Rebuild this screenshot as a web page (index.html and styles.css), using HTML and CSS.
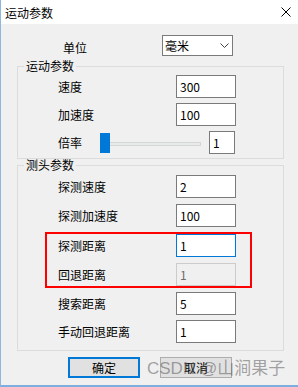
FILE: index.html
```html
<!DOCTYPE html>
<html lang="zh">
<head>
  <meta charset="utf-8">
  <link rel="stylesheet" href="styles.css">
</head>
<body>
  <div class="window">
    <div class="titlebar">
      <span class="title">运动参数</span>
      <svg class="close" width="10" height="10" viewBox="0 0 10 10">
        <path d="M0.5 0.5L9.5 9.5M9.5 0.5L0.5 9.5" stroke="#000" stroke-width="1" fill="none"/>
      </svg>
    </div>

    <div class="unit-row">
      <span class="unit-label">单位</span>
      <div class="select">
        <span>毫米</span>
        <svg width="9" height="5" viewBox="0 0 9 5">
          <path d="M0.5 0.5L4.5 4.5L8.5 0.5" stroke="#444" stroke-width="1" fill="none"/>
        </svg>
      </div>
    </div>

    <!-- 运动参数 -->
    <fieldset class="group motion">
      <legend>运动参数</legend>
      <div class="row">
        <label>速度</label>
        <input class="field" type="text" value="300">
      </div>
      <div class="row">
        <label>加速度</label>
        <input class="field" type="text" value="100">
      </div>
      <div class="row">
        <label class="short">倍率</label>
        <div class="slider">
          <div class="track"></div>
          <div class="thumb"></div>
        </div>
        <input class="field small" type="text" value="1">
      </div>
    </fieldset>

    <!-- 测头参数 -->
    <fieldset class="group probe">
      <legend>测头参数</legend>
      <div class="row">
        <label>探测速度</label>
        <input class="field" type="text" value="2">
      </div>
      <div class="row">
        <label>探测加速度</label>
        <input class="field" type="text" value="100">
      </div>
      <div class="mark">
        <div class="row">
          <label>探测距离</label>
          <input class="field focus" type="text" value="1">
        </div>
        <div class="row">
          <label>回退距离</label>
          <input class="field" type="text" value="1" disabled>
        </div>
      </div>
      <div class="row">
        <label>搜索距离</label>
        <input class="field" type="text" value="5">
      </div>
      <div class="row">
        <label>手动回退距离</label>
        <input class="field" type="text" value="1">
      </div>
    </fieldset>

    <div class="buttons">
      <button class="btn btn-default">确定</button>
      <button class="btn">取消</button>
    </div>

    <div class="watermark">CSDN @山涧果子</div>
  </div>
</body>
</html>
```

FILE: styles.css
```css
* {
  box-sizing: border-box;
}

body {
  margin: 0;
  font-family: "Noto Sans CJK SC", "Microsoft YaHei", sans-serif;
  font-size: 12px;
  color: #000;
}

.window {
  position: relative;
  width: 298px;
  height: 387px;
  background-color: #f0f0f0;
  border-left: 1px solid #8fb6de;
  border-bottom: 2px solid #7eaee0;
  overflow: hidden;
}

.titlebar {
  display: flex;
  justify-content: space-between;
  align-items: center;
  height: 24px;
  background-color: #fff;
  padding: 0 7px 0 4px;
}

.unit-row {
  display: flex;
  align-items: center;
  height: 21px;
  margin-top: 11px;
}

.unit-label {
  width: 161px;
  padding-left: 62px;
  line-height: 16px;
  margin-top: 5px;
}

.select {
  display: flex;
  justify-content: space-between;
  align-items: center;
  width: 71px;
  height: 21px;
  border: 1px solid #7a7a7a;
  background-color: #fff;
  padding: 0 3px 0 2px;
}

.group {
  margin: 4px 14px 0 16px;
  border: 1px solid #dcdcdc;
  padding: 3px 0 4px 0;
  min-width: 0;
}

.group legend {
  margin-left: 6px;
  padding: 0 2px;
  line-height: 12px;
}

.probe {
  margin-top: 0;
  padding: 4px 0 7px 0;
}

.row {
  display: flex;
  align-items: center;
  height: 23px;
}

.row label {
  width: 158px;
  padding-left: 40px;
}

.row label.short {
  width: 82px;
}

.motion .row + .row {
  margin-top: 5px;
}

.probe .row + .row,
.mark .row + .row {
  margin-top: 6px;
}

.mark {
  margin: 5px 31px 0 27px;
  border: 2px solid #ff0000;
}

.mark .row label {
  width: 129px;
  padding-left: 11px;
}

.mark + .row {
  margin-top: 4px;
}

.probe > .row:last-child {
  margin-top: 5px;
}

.field {
  width: 60px;
  height: 23px;
  border: 1px solid #7a7a7a;
  background-color: #fff;
  padding: 0 3px;
  font-family: "Noto Sans CJK SC", "Microsoft YaHei", sans-serif;
  font-size: 12px;
  color: #000;
  outline: none;
}

.field.small {
  width: 26px;
}

.field.focus {
  border-color: #0078d7;
}

.field:disabled {
  background-color: #f0f0f0;
  border-color: #cccccc;
  color: #6d6d6d;
}

.slider {
  position: relative;
  display: flex;
  align-items: center;
  width: 101px;
  height: 20px;
  margin-right: 8px;
}

.track {
  width: 100%;
  height: 4px;
  margin-top: 3px;
  background-color: #e7eaea;
  border: 1px solid #d6d6d6;
}

.thumb {
  position: absolute;
  left: 0;
  top: 0;
  width: 10px;
  height: 20px;
  background-color: #0078d7;
}

.buttons {
  display: flex;
  gap: 20px;
  margin: 6px 0 0 67px;
}

.btn {
  width: 72px;
  height: 21px;
  padding: 0;
  background-color: #e1e1e1;
  border: 1px solid #adadad;
  font-family: "Noto Sans CJK SC", "Microsoft YaHei", sans-serif;
  font-size: 12px;
  color: #000;
}

.btn-default {
  border: 2px solid #0078d7;
}

.watermark {
  position: absolute;
  left: 146px;
  top: 359px;
  font-family: "Liberation Sans", "Noto Sans CJK SC", sans-serif;
  font-size: 17px;
  line-height: 20px;
  color: rgba(90, 90, 90, 0.55);
  white-space: nowrap;
}
```
